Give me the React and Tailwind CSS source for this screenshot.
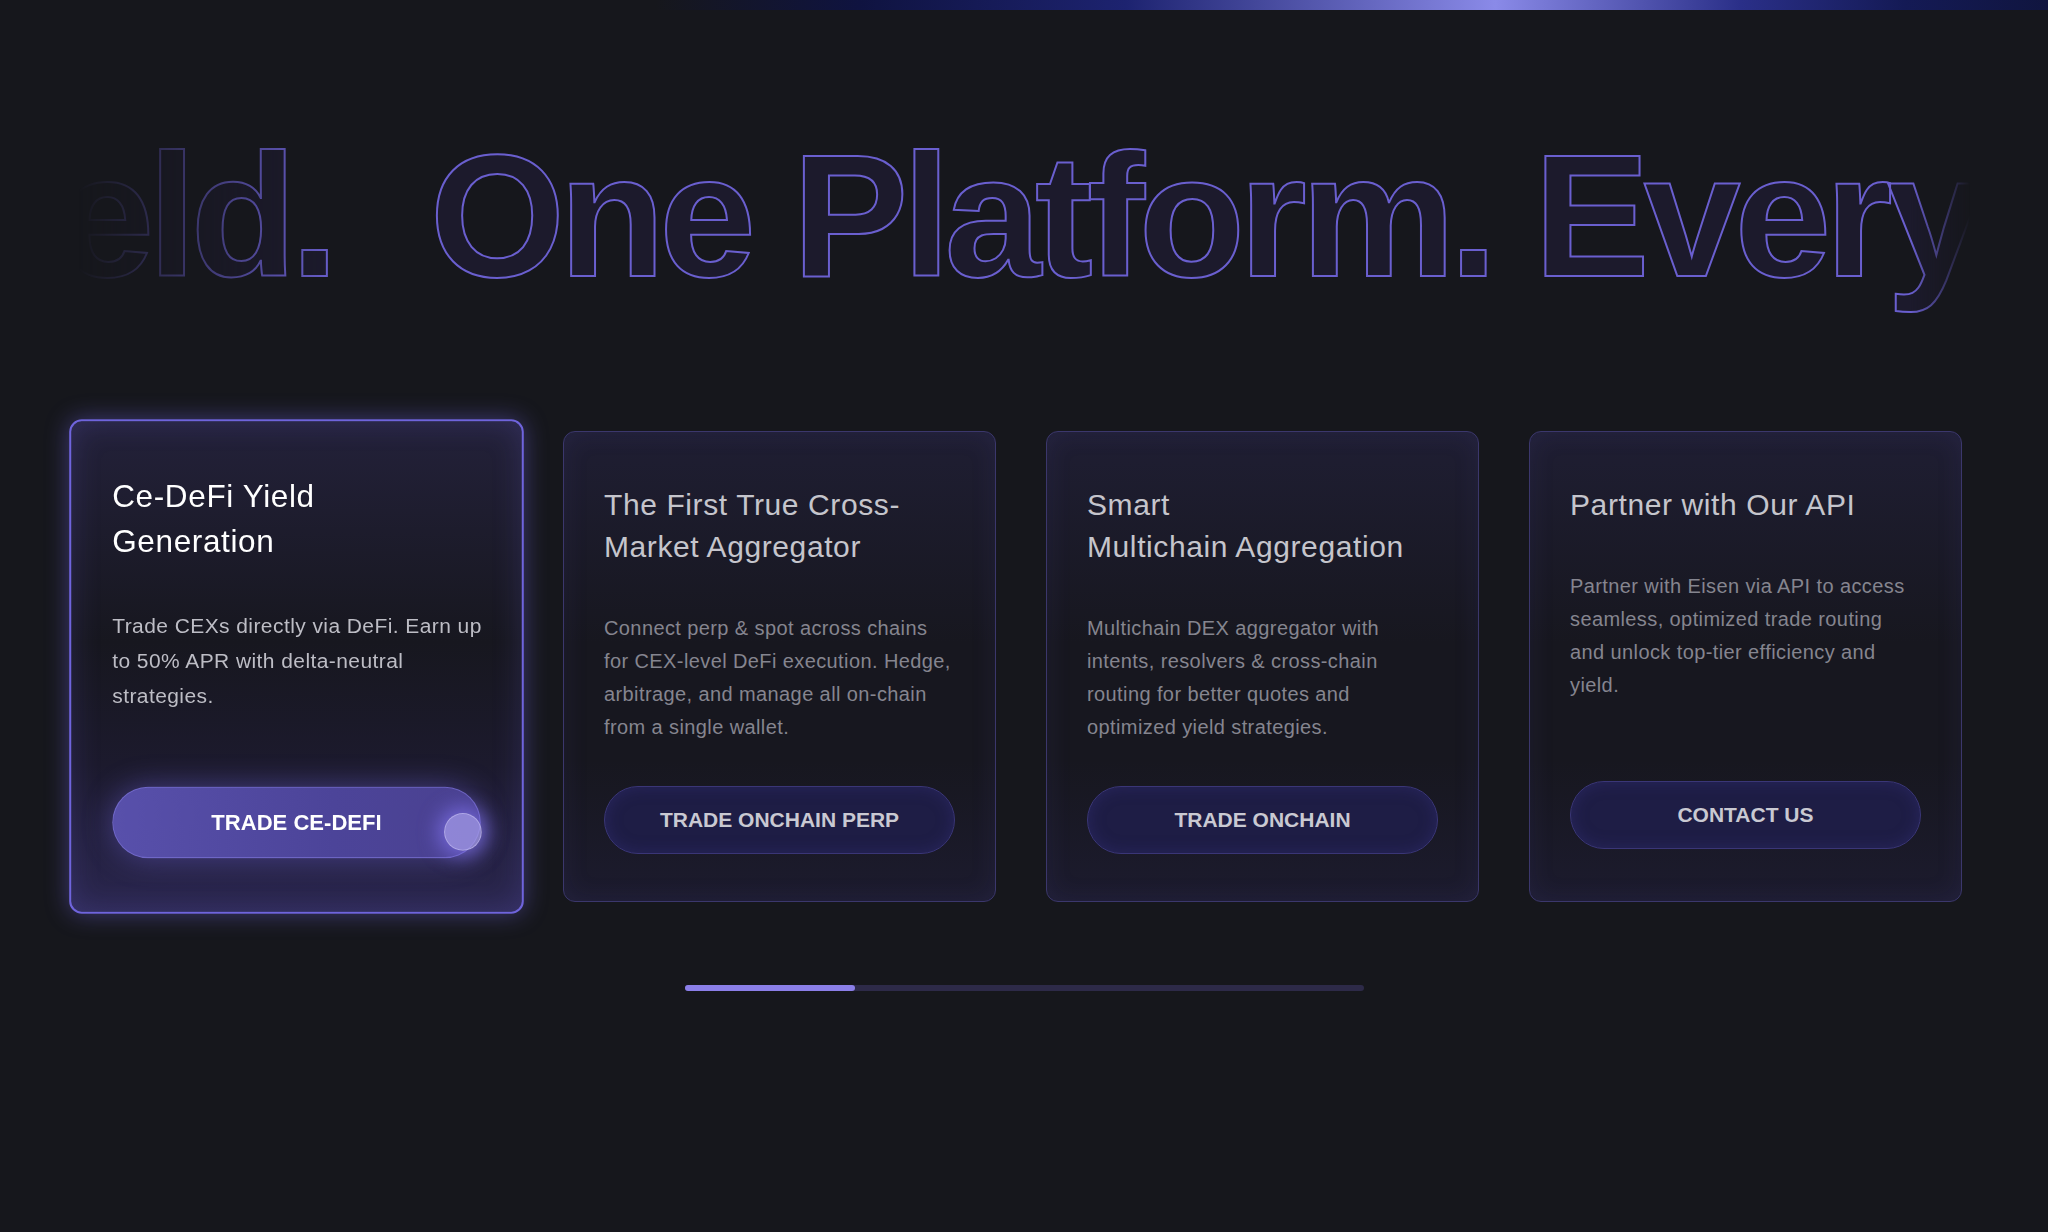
import React from 'react'

const cards = [
  {
    title: ['Ce-DeFi Yield', 'Generation'],
    body: ['Trade CEXs directly via DeFi. Earn up', 'to 50% APR with delta-neutral', 'strategies.'],
    cta: 'TRADE CE-DEFI',
    active: true,
  },
  {
    title: ['The First True Cross-', 'Market Aggregator'],
    body: ['Connect perp & spot across chains', 'for CEX-level DeFi execution. Hedge,', 'arbitrage, and manage all on-chain', 'from a single wallet.'],
    cta: 'TRADE ONCHAIN PERP',
  },
  {
    title: ['Smart', 'Multichain Aggregation'],
    body: ['Multichain DEX aggregator with', 'intents, resolvers & cross-chain', 'routing for better quotes and', 'optimized yield strategies.'],
    cta: 'TRADE ONCHAIN',
  },
  {
    title: ['Partner with Our API'],
    body: ['Partner with Eisen via API to access', 'seamless, optimized trade routing', 'and unlock top-tier efficiency and', 'yield.'],
    cta: 'CONTACT US',
    lift: true,
  },
]

function Marquee() {
  const phrase = 'One Platform. Every Yield.'
  return (
    <div className="mt-[90px] h-[231px] overflow-hidden mx-[78px] [mask-image:linear-gradient(90deg,transparent_0px,rgba(0,0,0,0.15)_40px,#000_260px,#000_calc(100%-60px),transparent_100%)]">
      <div className="flex gap-[97px] whitespace-nowrap -ml-[1753px]">
        {[0, 1, 2].map((i) => (
          <span
            key={i}
            className="text-[174px] leading-[231px] font-bold tracking-[-0.035em] text-[#1c1a2c] [-webkit-text-stroke:2px_#6a5fcf] shrink-0"
          >
            {phrase}
          </span>
        ))}
      </div>
    </div>
  )
}

function Card({ card }) {
  const { title, body, cta, active, lift } = card
  const pad = active ? 'px-[39px] pt-[51px] pb-[51px] ' : lift ? 'px-10 pt-[52px] pb-[52px] ' : 'px-10 pt-[52px] pb-[47px] '
  return (
    <div
      className={
        'relative w-[433px] h-[471px] shrink-0 rounded-xl flex flex-col ' +
        pad +
        (active
          ? 'scale-[1.05] border-2 border-[#6f64dc] bg-[linear-gradient(180deg,#23213a_0%,#17171f_45%,#1c1a2d_70%,#2b2750_100%)] shadow-[0_0_22px_rgba(111,100,220,0.45),inset_0_0_28px_rgba(111,100,220,0.22)]'
          : 'border border-[#3b376c] bg-[linear-gradient(180deg,#1f1e33_0%,#17171f_45%,#17171f_70%,#1c1b2e_100%)] shadow-[inset_0_0_26px_rgba(90,80,180,0.12)]')
      }
    >
      <h3 className={'text-[30px] leading-[42px] tracking-[0.02em] ' + (active ? 'text-white' : 'text-[#c5c5cc]')}>
        {title.map((t, i) => (
          <div key={i} className="whitespace-nowrap">{t}</div>
        ))}
      </h3>
      <p className={'mt-[44px] text-[20px] leading-[33px] tracking-[0.02em] ' + (active ? 'text-[#bdbdc5]' : 'text-[#85858f]')}>
        {body.map((t, i) => (
          <span key={i} className="block whitespace-nowrap">{t}</span>
        ))}
      </p>
      {active ? (
        <button className="relative mt-auto h-[68px] w-full rounded-full border border-[#7b72d4]/70 bg-[linear-gradient(90deg,#5850ab_0%,#4c4499_60%,#4a4190_100%)] shadow-[0_0_28px_rgba(111,100,220,0.45)] text-white text-[21px] font-bold">
          {cta}
          <span className="absolute -right-[2px] top-[24px] w-[36px] h-[36px] rounded-full bg-[#a69cec]/75 border border-[#c5bdf5]/60 shadow-[0_0_18px_6px_rgba(130,115,240,0.7)]" />
        </button>
      ) : (
        <button className="mt-auto h-[68px] w-full rounded-full border border-[#3a3677] bg-[#1e1d45] shadow-[inset_0_0_16px_rgba(60,55,140,0.35)] text-[#c9c9d2] text-[21px] font-bold">
          {cta}
        </button>
      )}
    </div>
  )
}

export default function App() {
  return (
    <div
      className="min-h-screen w-full bg-[#16171c] overflow-hidden flex flex-col"
      style={{ fontFamily: '"Liberation Sans", Arial, sans-serif' }}
    >
      {/* Top accent bar */}
      <div className="h-[10px] w-full bg-[linear-gradient(90deg,#16171c_0%,#16171c_32%,#0f1340_42%,#1d2370_55%,#8a8ae8_73%,#2a2f88_85%,#141a55_93%,#10153f_100%)]" />

      <Marquee />

      {/* Cards */}
      <div className="mt-[100px] flex items-start gap-[50px] px-20">
        {cards.map((c, i) => (
          <Card key={i} card={c} />
        ))}
      </div>

      {/* Progress */}
      <div className="mt-[83px] flex justify-center">
        <div className="w-[679px] h-[6px] rounded-full bg-[#2d2a48] flex">
          <div className="w-[170px] h-full rounded-full bg-[#8b7fe8]" />
        </div>
      </div>
    </div>
  )
}
